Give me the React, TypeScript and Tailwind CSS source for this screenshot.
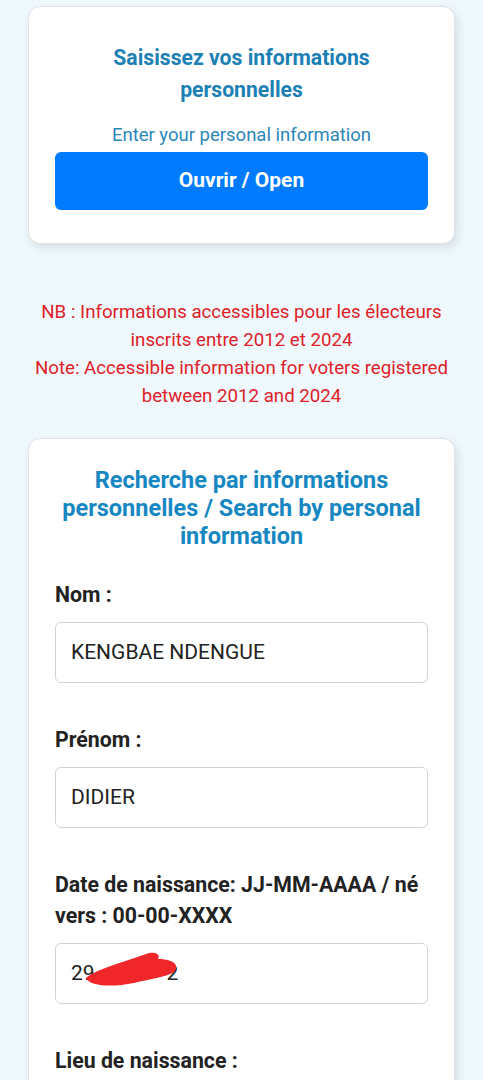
import React from "react";

export default function App() {
  const font = { fontFamily: "Roboto, 'Noto Sans', sans-serif" };
  return (
    <div className="min-h-[1080px] bg-[#eef8fd] px-[28px] pt-[6px] pb-10" style={font}>
      <div className="rounded-[12px] border border-[#dfe3e8] bg-white px-[26px] pt-[35px] pb-[33px] shadow-[3px_4px_10px_rgba(0,0,0,0.10)]">
        <h2 className="text-center text-[21.2px] font-bold leading-[32px] text-[#1c80b5]">
          Saisissez vos informations
          <br />
          personnelles
        </h2>
        <p className="mt-[16px] text-center text-[18.5px] leading-[27px] text-[#2a87b8]">
          Enter your personal information
        </p>
        <button className="mt-[3px] flex h-[58px] w-full items-center justify-center rounded-[6px] bg-[#007bff] text-[21px] font-bold text-white">
          Ouvrir / Open
        </button>
      </div>

      <div className="mt-[54px] text-center text-[18.7px] leading-[28px] text-[#df2128]">
        <p>
          NB : Informations accessibles pour les électeurs
          <br />
          inscrits entre 2012 et 2024
        </p>
        <p>
          Note: Accessible information for voters registered
          <br />
          between 2012 and 2024
        </p>
      </div>

      <div className="mt-[28px] rounded-[12px] border border-[#dfe3e8] bg-white px-[26px] pt-[27px] pb-10 shadow-[3px_4px_10px_rgba(0,0,0,0.10)]">
        <h2 className="-mx-[10px] text-center text-[23.5px] font-bold leading-[28px] text-[#1787c2]">
          Recherche par informations
          <br />
          personnelles / Search by personal
          <br />
          information
        </h2>

        <div className="mt-[29px] flex flex-col gap-[41px]">
          <Field label="Nom :" value="KENGBAE NDENGUE" />
          <Field label="Prénom :" value="DIDIER" />
          <div>
            <label className="block text-[21.3px] font-bold leading-[31px] text-[#222]">
              Date de naissance: JJ-MM-AAAA / né
              <br />
              vers : 00-00-XXXX
            </label>
            <div className="relative mt-[12px] flex h-[61px] items-center rounded-[6px] border border-[#cfd3d7] bg-white px-[15px] text-[21px] text-[#222]">
              <span>29</span>
              <span className="ml-[72px]">2</span>
              <svg
                className="absolute left-[28px] top-[8px]"
                width="96"
                height="36"
                viewBox="0 0 96 36"
              >
                <path
                  d="M2 26 C10 18, 40 10, 62 2 C70 -1, 77 2, 74 7 C84 7, 94 10, 92 17 C90 24, 70 26, 50 31 C30 35, 6 35, 2 26 Z"
                  fill="#f0262b"
                />
              </svg>
            </div>
          </div>
          <div>
            <label className="block text-[21.3px] font-bold leading-[31px] text-[#222]">
              Lieu de naissance :
            </label>
            <div className="mt-[12px] h-[61px] rounded-[6px] border border-[#cfd3d7] bg-white" />
          </div>
        </div>
      </div>
    </div>
  );
}

function Field({ label, value }: { label: string; value: string }) {
  return (
    <div>
      <label className="block text-[21.3px] font-bold leading-[31px] text-[#222]">{label}</label>
      <div className="mt-[12px] flex h-[61px] items-center rounded-[6px] border border-[#cfd3d7] bg-white px-[15px] text-[21px] text-[#222]">
        {value}
      </div>
    </div>
  );
}
